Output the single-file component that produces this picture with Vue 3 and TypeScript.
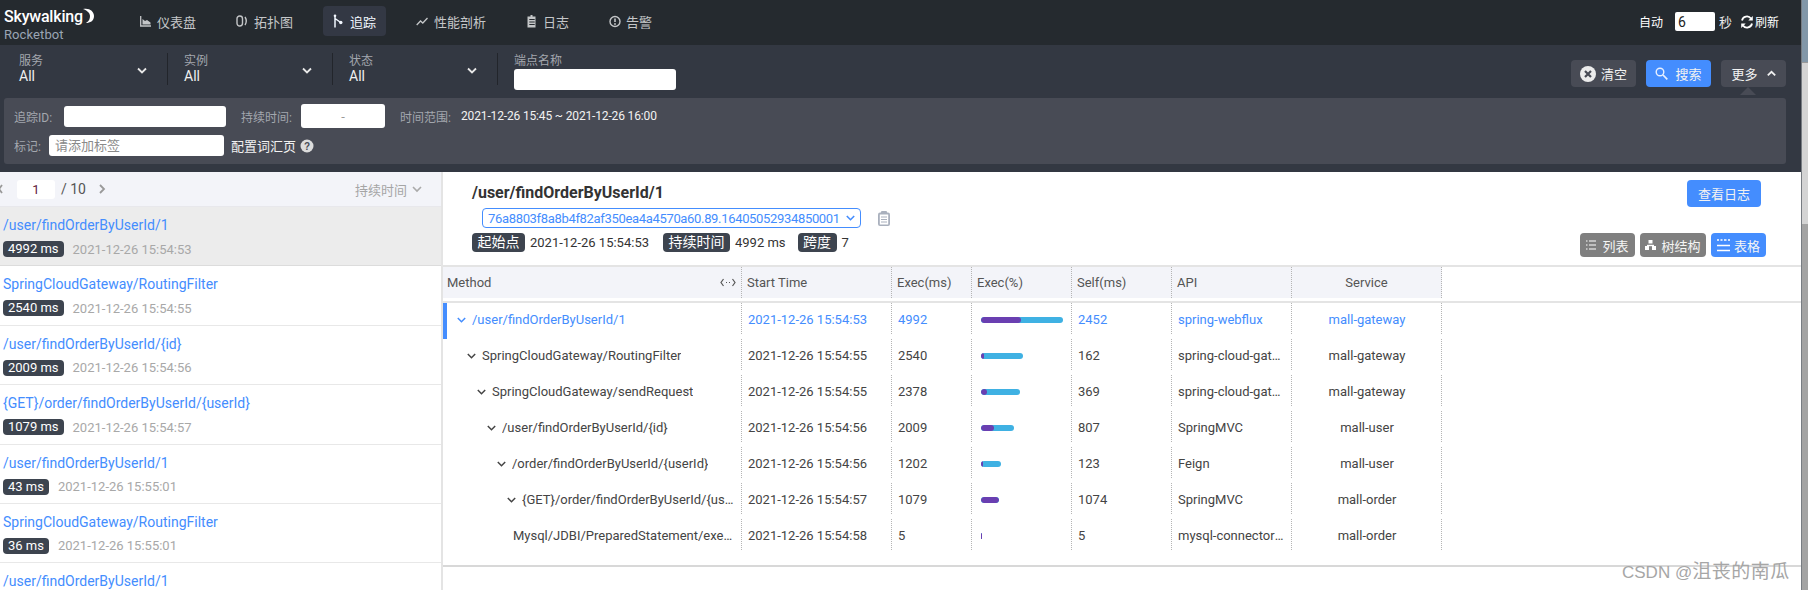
<script setup lang="ts">
interface Trace { title: string; ms: string; time: string; active?: boolean }
interface Span { method: string; start: string; exec: string; blue: number; purple: number; self: string; api: string; service: string; pad: number; chevron: boolean; active?: boolean }

const traces: Trace[] = [
  { title: '/user/findOrderByUserId/1', ms: '4992 ms', time: '2021-12-26 15:54:53', active: true },
  { title: 'SpringCloudGateway/RoutingFilter', ms: '2540 ms', time: '2021-12-26 15:54:55' },
  { title: '/user/findOrderByUserId/{id}', ms: '2009 ms', time: '2021-12-26 15:54:56' },
  { title: '{GET}/order/findOrderByUserId/{userId}', ms: '1079 ms', time: '2021-12-26 15:54:57' },
  { title: '/user/findOrderByUserId/1', ms: '43 ms', time: '2021-12-26 15:55:01' },
  { title: 'SpringCloudGateway/RoutingFilter', ms: '36 ms', time: '2021-12-26 15:55:01' },
  { title: '/user/findOrderByUserId/1', ms: '35 ms', time: '2021-12-26 15:55:02' }
]

const spans: Span[] = [
  { method: '/user/findOrderByUserId/1', start: '2021-12-26 15:54:53', exec: '4992', blue: 82, purple: 40, self: '2452', api: 'spring-webflux', service: 'mall-gateway', pad: 14, chevron: true, active: true },
  { method: 'SpringCloudGateway/RoutingFilter', start: '2021-12-26 15:54:55', exec: '2540', blue: 42, purple: 3, self: '162', api: 'spring-cloud-gateway-3.x', service: 'mall-gateway', pad: 24, chevron: true },
  { method: 'SpringCloudGateway/sendRequest', start: '2021-12-26 15:54:55', exec: '2378', blue: 39, purple: 6, self: '369', api: 'spring-cloud-gateway-3.x', service: 'mall-gateway', pad: 34, chevron: true },
  { method: '/user/findOrderByUserId/{id}', start: '2021-12-26 15:54:56', exec: '2009', blue: 33, purple: 13, self: '807', api: 'SpringMVC', service: 'mall-user', pad: 44, chevron: true },
  { method: '/order/findOrderByUserId/{userId}', start: '2021-12-26 15:54:56', exec: '1202', blue: 20, purple: 2, self: '123', api: 'Feign', service: 'mall-user', pad: 54, chevron: true },
  { method: '{GET}/order/findOrderByUserId/{userId}', start: '2021-12-26 15:54:57', exec: '1079', blue: 18, purple: 18, self: '1074', api: 'SpringMVC', service: 'mall-order', pad: 64, chevron: true },
  { method: 'Mysql/JDBI/PreparedStatement/execute', start: '2021-12-26 15:54:58', exec: '5', blue: 1, purple: 1, self: '5', api: 'mysql-connector-java', service: 'mall-order', pad: 70, chevron: false }
]
</script>

<template>
  <div class="page">
    <div class="main">
      <header class="nav">
        <div class="logo">
          <div class="logo-top">
            <span class="logo-name">Skywalking</span>
            <svg class="logo-moon" width="15" height="16" viewBox="0 0 15 16"><path d="M2 1c6-1.500 11 2 11 7s-4 7-8 7c3-2 4-4 4-7S6 2.500 2 1z" fill="#fff"/></svg>
          </div>
          <div class="logo-sub">Rocketbot</div>
        </div>
        <nav class="menu">
          <a class="menu-item">
            <svg width="12" height="16" viewBox="0 0 12 16"><path d="M.7 3v10h10.300" fill="none" stroke="currentColor" stroke-width="1.300"/><path d="M2.500 11.500V6l2.500 2 2-1 3.500 2.500v2z" fill="currentColor"/></svg>
            <span>仪表盘</span>
          </a>
          <a class="menu-item">
            <svg width="13" height="16" viewBox="0 0 13 16"><rect x="1" y="3" width="5.500" height="10" rx="2.700" fill="none" stroke="currentColor" stroke-width="1.400"/><path d="M9 4c1.600 2.500 1.600 5.500 0 8" fill="none" stroke="currentColor" stroke-width="1.400"/></svg>
            <span>拓扑图</span>
          </a>
          <a class="menu-item active">
            <svg width="12" height="16" viewBox="0 0 12 16"><path d="M2 2.500v12M2 5.500 7 9" fill="none" stroke="currentColor" stroke-width="1.500"/><circle cx="2" cy="2.700" r="1.300" fill="currentColor"/><circle cx="7.800" cy="9.500" r="1.700" fill="currentColor"/></svg>
            <span>追踪</span>
          </a>
          <a class="menu-item">
            <svg width="13" height="16" viewBox="0 0 13 16"><path d="M.7 12 4.500 8l2.300 2 4.700-5" fill="none" stroke="currentColor" stroke-width="1.300"/></svg>
            <span>性能剖析</span>
          </a>
          <a class="menu-item">
            <svg width="12" height="16" viewBox="0 0 12 16"><path d="M1.500 3.500h3V2h2v1.500h3v11h-8z" fill="currentColor"/><path d="M3.300 6.500h5.400M3.300 9h5.400M3.300 11.500h5.400" stroke="#252a2f" stroke-width="1.100"/></svg>
            <span>日志</span>
          </a>
          <a class="menu-item">
            <svg width="12" height="16" viewBox="0 0 12 16"><circle cx="6" cy="8.500" r="5" fill="none" stroke="currentColor" stroke-width="1.400"/><path d="M6 5.500v3.600" stroke="currentColor" stroke-width="1.600"/><circle cx="6" cy="11" r=".9" fill="currentColor"/></svg>
            <span>告警</span>
          </a>
        </nav>
        <div class="auto">
          <span class="auto-label">自动</span>
          <input class="auto-input" value="6" readonly />
          <span class="auto-sec">秒</span>
          <svg class="refresh" width="14" height="14" viewBox="0 0 14 14"><path d="M2 5.500A5 5 0 0 1 11 3.500M12 8.500A5 5 0 0 1 3 10.500" fill="none" stroke="#fff" stroke-width="1.800"/><path d="M12.800 1v4.500H8.300zM1.200 13V8.500h4.500z" fill="#fff"/></svg>
          <span class="auto-refresh">刷新</span>
        </div>
      </header>

      <section class="filters">
        <div class="filter-row">
          <div class="group">
            <div><div class="group-label">服务</div><div class="group-value">All</div></div>
            <svg class="group-chev" width="10" height="8" viewBox="0 0 10 8"><path d="M1 1.500 5 5.500l4-4" fill="none" stroke="#e8e8e8" stroke-width="1.800"/></svg>
          </div>
          <div class="group">
            <div><div class="group-label">实例</div><div class="group-value">All</div></div>
            <svg class="group-chev" width="10" height="8" viewBox="0 0 10 8"><path d="M1 1.500 5 5.500l4-4" fill="none" stroke="#e8e8e8" stroke-width="1.800"/></svg>
          </div>
          <div class="group">
            <div><div class="group-label">状态</div><div class="group-value">All</div></div>
            <svg class="group-chev" width="10" height="8" viewBox="0 0 10 8"><path d="M1 1.500 5 5.500l4-4" fill="none" stroke="#e8e8e8" stroke-width="1.800"/></svg>
          </div>
          <div class="endpoint">
            <div class="group-label">端点名称</div>
            <input class="endpoint-input" readonly />
          </div>
          <div class="actions">
            <button class="btn dark">
              <svg width="16" height="16" viewBox="0 0 16 16"><circle cx="8" cy="8" r="8" fill="#ececec"/><path d="M5 5l6 6M11 5l-6 6" stroke="#484b55" stroke-width="2.200"/></svg>
              <span>清空</span>
            </button>
            <button class="btn blue search">
              <svg width="13" height="13" viewBox="0 0 13 13"><circle cx="5" cy="5" r="3.800" fill="none" stroke="#e8f0ff" stroke-width="1.400"/><path d="M8 8l4.300 4.300" stroke="#e8f0ff" stroke-width="1.700"/></svg>
              <span>搜索</span>
            </button>
            <button class="btn dark more">
              <span>更多</span>
              <svg width="9" height="7" viewBox="0 0 9 7"><path d="M.8 5.300 4.500 1.800l3.700 3.500" fill="none" stroke="#f0f0f0" stroke-width="1.800"/></svg>
              <i class="more-arrow"></i>
            </button>
          </div>
        </div>
        <div class="panel">
          <div class="panel-row">
            <span class="p-label w-id">追踪ID:</span>
            <input class="p-input trace-id" readonly />
            <span class="p-label w-dur">持续时间:</span>
            <input class="p-input duration" value="-" readonly />
            <span class="p-label w-range">时间范围:</span>
            <span class="range">2021-12-26 15:45 ~ 2021-12-26 16:00</span>
          </div>
          <div class="panel-row second">
            <span class="p-label w-tag">标记:</span>
            <input class="p-input tag" placeholder="请添加标签" readonly />
            <span class="vocab">配置词汇页</span>
            <svg width="14" height="14" viewBox="0 0 14 14"><circle cx="7" cy="7" r="6.500" fill="#dcdcdc"/><text x="7" y="10.500" text-anchor="middle" font-size="10" font-weight="700" fill="#484b55" font-family="Liberation Sans, sans-serif">?</text></svg>
          </div>
        </div>
      </section>

      <section class="body">
        <aside class="side">
          <div class="pager">
            <svg class="pager-prev" width="6" height="10" viewBox="0 0 6 10"><path d="M3 1 0 5l3 4" fill="none" stroke="#999" stroke-width="1.800"/></svg>
            <input class="pager-input" value="1" readonly />
            <span class="pager-total">/ 10</span>
            <svg class="pager-next" width="7" height="10" viewBox="0 0 7 10"><path d="M1 1l4 4-4 4" fill="none" stroke="#999" stroke-width="1.800"/></svg>
            <span class="sort">持续时间</span>
            <svg class="sort-chev" width="10" height="7" viewBox="0 0 10 7"><path d="M1 1l4 4 4-4" fill="none" stroke="#aaa" stroke-width="1.600"/></svg>
          </div>
          <div class="trace-list">
            <div v-for="t in traces" :key="t.title + t.ms" class="trace" :class="{ on: t.active }">
              <div class="trace-title">{{ t.title }}</div>
              <div class="trace-meta">
                <span class="ms">{{ t.ms }}</span>
                <span class="trace-time">{{ t.time }}</span>
              </div>
            </div>
          </div>
        </aside>

        <div class="detail">
          <div class="detail-head">
            <div class="head-left">
              <div class="detail-title">/user/findOrderByUserId/1</div>
              <div class="id-row">
                <div class="id-select">
                  <span>76a8803f8a8b4f82af350ea4a4570a60.89.16405052934850001</span>
                  <svg width="9" height="6" viewBox="0 0 9 6"><path d="M.8 1 4.500 4.700 8.200 1" fill="none" stroke="#448dfe" stroke-width="1.600"/></svg>
                </div>
                <svg class="clip" width="12" height="15" viewBox="0 0 12 15"><rect x="0" y="1.500" width="12" height="13.500" rx="2" fill="#a9b0bd"/><rect x="3" y="0" width="6" height="3.500" rx="1" fill="#a9b0bd"/><rect x="1.800" y="3.500" width="8.400" height="10" fill="#fff"/><path d="M3 6h6M3 8.500h6M3 11h6" stroke="#a9b0bd" stroke-width="1"/></svg>
              </div>
              <div class="meta-row">
                <span class="tag-badge">起始点</span><span class="meta-val first">2021-12-26 15:54:53</span>
                <span class="tag-badge">持续时间</span><span class="meta-val second-val">4992 ms</span>
                <span class="tag-badge">跨度</span><span class="meta-val">7</span>
              </div>
            </div>
            <div class="head-right">
              <button class="btn blue log-btn">查看日志</button>
              <div class="view-btns">
                <button class="vbtn gray">
                  <svg width="10" height="10" viewBox="0 0 10 10"><path d="M0 1h1.500M3 1h7M0 5h1.500M3 5h7M0 9h1.500M3 9h7" stroke="#fff" stroke-width="1.200"/></svg>
                  <span>列表</span>
                </button>
                <button class="vbtn gray tree">
                  <svg width="11" height="10" viewBox="0 0 11 10"><rect x="3.500" y="0" width="4" height="3.500" fill="#fff"/><path d="M2 5.500h7" stroke="#fff" stroke-width="1.400"/><rect x="0" y="6" width="4" height="4" fill="#fff"/><rect x="7" y="6" width="4" height="4" fill="#fff"/></svg>
                  <span>树结构</span>
                </button>
                <button class="vbtn bluev">
                  <svg width="13" height="13" viewBox="0 0 13 13"><path d="M0 1h2M3.500 1h2M7 1h2.500M11 1h2M0 6.500h13M0 11.500h13" stroke="#fff" stroke-width="1.500"/></svg>
                  <span>表格</span>
                </button>
              </div>
            </div>
          </div>

          <div class="table">
            <div class="thead">
              <div class="th method-th">
                <span>Method</span>
                <svg width="16" height="9" viewBox="0 0 16 9"><path d="M3.500 1 1 4.500 3.500 8M12.500 1 15 4.500 12.500 8" fill="none" stroke="#555" stroke-width="1.200"/><path d="M6 4.500h1M9 4.500h1" stroke="#555" stroke-width="1.200"/></svg>
              </div>
              <div class="th">Start Time</div>
              <div class="th">Exec(ms)</div>
              <div class="th">Exec(%)</div>
              <div class="th">Self(ms)</div>
              <div class="th">API</div>
              <div class="th center">Service</div>
            </div>
            <div class="tbody">
              <div v-for="s in spans" :key="s.method + s.exec" class="tr" :class="{ hot: s.active }">
                <div class="td method" :style="{ paddingLeft: s.pad + 'px' }">
                  <span v-if="s.chevron" class="tree-chev">
                    <svg width="9" height="6" viewBox="0 0 9 6"><path d="M.8 1 4.500 4.700 8.200 1" fill="none" stroke="currentColor" stroke-width="1.500"/></svg>
                  </span>
                  <span class="ellipsis">{{ s.method }}</span>
                </div>
                <div class="td">{{ s.start }}</div>
                <div class="td">{{ s.exec }}</div>
                <div class="td bar-cell">
                  <div class="bar" :style="{ width: s.blue + 'px' }">
                    <div class="bar-in" :style="{ width: s.purple + 'px' }"></div>
                  </div>
                </div>
                <div class="td">{{ s.self }}</div>
                <div class="td"><span class="ellipsis">{{ s.api }}</span></div>
                <div class="td center">{{ s.service }}</div>
              </div>
            </div>
            <div class="table-end"></div>
          </div>
        </div>
      </section>
    </div>

    <div class="scrollbar">
      <div class="sb-a"></div>
      <div class="sb-b"></div>
      <div class="sb-c"></div>
    </div>
    <div class="watermark">CSDN @<span class="wm-cjk">沮丧的南瓜</span></div>
  </div>
</template>

<style>
html, body { margin: 0; overflow: hidden; background: #fff; }
</style>

<style scoped>
* { box-sizing: border-box; }
.page {
  position: relative;
  display: flex;
  width: 1808px;
  height: 590px;
  overflow: hidden;
  font-family: Roboto, "Noto Sans CJK SC", sans-serif;
  font-size: 13px;
  color: #444;
}
.main { width: 1801px; display: flex; flex-direction: column; }
input { border: 0; outline: 0; padding: 0; font-family: inherit; background: #fff; display: block; }
button { border: 0; padding: 0; font-family: inherit; cursor: pointer; }

/* nav */
.nav { height: 45px; background: #252a2f; display: flex; padding-top: 6px; flex: none; }
.logo { width: 130px; padding-left: 4px; margin-top: 1px; }
.logo-top { display: flex; height: 20px; align-items: flex-end; }
.logo-name { font-size: 16px; font-weight: 500; color: #fff; line-height: 20px; letter-spacing: -.2px; }
.logo-moon { margin-left: -2px; margin-bottom: 3px; }
.logo-sub { font-size: 13px; line-height: 15px; color: #9aa5b4; letter-spacing: .1px; }
.menu { display: flex; align-items: flex-start; }
.menu-item { display: flex; align-items: center; gap: 5px; height: 30px; padding: 0 10px; margin-right: 20px; border-radius: 4px; color: #c4c6c8; font-size: 13px; white-space: nowrap; }
.menu-item.active { background: #333844; color: #f2f7ff; margin-right: 20px; }
.auto { margin-left: auto; display: flex; align-items: center; height: 33px; color: #fff; font-size: 12px; padding-right: 22px; margin-top: -1px; }
.auto-input { width: 40px; height: 19px; border-radius: 2px; margin-left: 12px; padding-left: 3px; font-size: 14px; color: #222; }
.auto-sec { margin-left: 4px; font-size: 13px; color: #e8e8e8; }
.refresh { margin-left: 8px; margin-right: 1px; }

/* filters */
.filters { height: 127px; background: #333842; flex: none; display: flex; flex-direction: column; }
.filter-row { height: 53px; display: flex; padding: 8px 15px 0 19px; flex: none; }
.group { width: 149px; height: 32px; margin-right: 16px; border-right: 1px solid #22252b; display: flex; justify-content: space-between; }
.group-label { font-size: 12px; line-height: 16px; color: #a3a7ae; }
.group-value { font-size: 14px; line-height: 16px; margin-top: -1px; color: #f0f0f0; }
.group-chev { margin: 14px 20px 0 0; }
.endpoint { width: 162px; }
.endpoint-input { width: 162px; height: 21px; border-radius: 3px; margin-top: 0; }
.actions { margin-left: auto; display: flex; gap: 10px; padding-top: 7px; }
.btn { height: 27px; width: 65px; border-radius: 4px; color: #f2f2f2; font-size: 13px; display: flex; align-items: center; justify-content: center; gap: 5px; position: relative; }
.btn.dark { background: #484b55; }
.btn.blue { background: #448dfe; }
.search { gap: 7px; }
.more { gap: 9px; }
.more-arrow { position: absolute; left: 19px; top: 27px; border: 8px solid transparent; border-top: 0; border-bottom-color: #484b55; }
.panel { height: 66px; margin: 0 15px 0 4px; background: #484b55; border-radius: 3px; padding: 6px 0 0 10px; }
.panel-row { display: flex; align-items: center; height: 24px; }
.panel-row.second { margin-top: 7px; height: 21px; }
.p-label { font-size: 12px; color: #a3a7ae; white-space: nowrap; }
.w-id { width: 50px; }
.w-dur { width: 60px; margin-left: 15px; }
.w-range { width: 61px; margin-left: 15px; }
.w-tag { width: 35px; }
.p-input { border-radius: 3px; font-size: 13px; }
.trace-id { width: 162px; height: 21px; }
.duration { width: 84px; height: 24px; text-align: center; color: #999; }
.range { font-size: 12px; color: #f2f2f2; letter-spacing: -.15px; white-space: nowrap; }
.tag { width: 175px; height: 21px; padding-left: 6px; color: #777; }
.tag::placeholder { color: #8a8a8a; opacity: 1; }
.vocab { margin: 0 4px 0 7px; font-size: 13px; color: #f2f2f2; }

/* body */
.body { flex: 1; display: flex; min-height: 0; background: #fff; }
.side { width: 443px; flex: none; border-right: 2px solid #e4e4e4; display: flex; flex-direction: column; overflow: hidden; }
.pager { height: 35px; flex: none; background: #f3f4f9; border-bottom: 1px solid #e8e8ec; display: flex; align-items: center; padding-left: 17px; position: relative; }
.pager-prev { position: absolute; left: -1px; top: 12px; }
.pager-input { width: 38px; height: 19px; border-radius: 3px; text-align: center; font-size: 13px; color: #60213a; }
.pager-total { margin-left: 6px; font-size: 14px; color: #555; }
.pager-next { margin-left: 13px; }
.sort { margin-left: auto; font-size: 13px; color: #a5a5a5; }
.sort-chev { margin: 0 19px 0 5px; }
.trace-list { flex: 1; overflow: hidden; }
.trace { height: 59.4px; padding: 8px 0 0 3px; border-bottom: 1px solid #e8e8e8; }
.trace.on { background: #ececec; border-bottom-color: #dcdcdc; }
.trace-title { font-size: 14px; line-height: 20px; color: #448dfe; white-space: nowrap; }
.trace-meta { display: flex; align-items: center; margin-top: 6px; height: 16px; }
.ms { height: 16px; line-height: 16px; padding: 0 5px; background: #3d444f; color: #fff; border-radius: 4px; font-size: 13px; white-space: nowrap; }
.trace-time { margin-left: 9px; font-size: 13px; color: #a8a8a8; white-space: nowrap; }

.detail { flex: 1; min-width: 0; display: flex; flex-direction: column; }
.detail-head { height: 93px; flex: none; display: flex; justify-content: space-between; }
.head-left { padding: 11px 0 0 29px; }
.detail-title { font-size: 16px; font-weight: 700; line-height: 20px; color: #333; }
.id-row { display: flex; align-items: center; margin: 5px 0 0 10px; height: 20px; }
.id-select { width: 379px; height: 20px; border: 1px solid #448dfe; border-radius: 4px; color: #448dfe; font-size: 13px; letter-spacing: -.33px; display: flex; align-items: center; justify-content: space-between; padding: 0 5px 0 5px; white-space: nowrap; }
.clip { margin-left: 17px; }
.meta-row { display: flex; align-items: center; margin: 5px 0 0 0; height: 19px; }
.tag-badge { height: 19px; line-height: 19px; padding: 0 5.5px; background: #3d444f; color: #fff; border-radius: 4px; font-size: 14px; white-space: nowrap; }
.meta-val { margin-left: 5px; font-size: 13px; color: #333; white-space: nowrap; }
.meta-val.first { margin-right: 14px; }
.meta-val.second-val { margin-right: 12px; }
.head-right { display: flex; flex-direction: column; align-items: flex-end; padding: 8px 35px 0 0; }
.log-btn { width: 74px; margin-right: 5px; gap: 0; }
.view-btns { display: flex; gap: 5px; margin-top: 26px; }
.vbtn { height: 24px; width: 55px; border-radius: 4px; color: #f5f5f5; font-size: 13px; display: flex; align-items: center; justify-content: center; gap: 6px; }
.vbtn.tree { width: 66px; gap: 5px; }
.vbtn.gray { background: #7f7f7f; }
.vbtn.bluev { background: #448dfe; gap: 4px; }

.table { flex: 1; border-top: 2px solid #e4e4e4; min-height: 0; }
.thead, .tr { display: grid; grid-template-columns: 299px 150px 80px 100px 100px 120px 150px; width: 999px; }
.thead { height: 31px; background: #f3f4f9; }
.tbody { border-top: 2px solid #e4e4e4; margin-top: 3px; }
.th { height: 31px; padding-left: 5px; line-height: 32px; color: #555; font-size: 13px; border-right: 1px dotted #b5b5b5; }
.th.center { text-align: center; padding-left: 0; }
.method-th { display: flex; align-items: center; justify-content: space-between; padding-right: 5px; padding-left: 4px; }
.tr { height: 36px; }
.td {
  height: 36px;
  padding: 0 6px 3px;
  display: flex;
  align-items: center;
  min-width: 0;
  white-space: nowrap;
  background-image: repeating-linear-gradient(to bottom, #b5b5b5 0 1px, transparent 1px 2px);
  background-size: 1px 31px;
  background-position: right top;
  background-repeat: no-repeat;
}
.td.center { justify-content: center; }
.tr.hot { color: #448dfe; }
.tr.hot .method { box-shadow: inset 4px 0 #448dfe; }
.method { padding-right: 7px; }
.tree-chev { width: 15px; flex: none; color: #444; display: flex; }
.hot .tree-chev { color: #448dfe; }
.ellipsis { overflow: hidden; text-overflow: ellipsis; white-space: nowrap; min-width: 0; }
.bar-cell { padding-left: 9px; }
.bar { height: 6px; background: #3fb1e3; border-radius: 3px; overflow: hidden; }
.bar-in { height: 6px; background: #6a3fb1; border-radius: 3px; }
.table-end { height: 0; margin-top: 10px; border-top: 2px solid #d8d8d8; }

.scrollbar { width: 7px; flex: none; display: flex; flex-direction: column; border-left: 1px solid #777c82; }
.sb-a { height: 62px; background: #8297a8; }
.sb-b { height: 162px; background: #d4d4d4; border-top: 1px solid #999; }
.sb-c { flex: 1; background: #a3a3a3; }

.watermark { position: absolute; left: 1622px; top: 562px; font-size: 17px; line-height: 20px; color: #a6a6a6; white-space: nowrap; font-family: "Liberation Sans", "Noto Sans CJK SC", sans-serif; }
.wm-cjk { font-size: 19px; letter-spacing: .5px; }
</style>
